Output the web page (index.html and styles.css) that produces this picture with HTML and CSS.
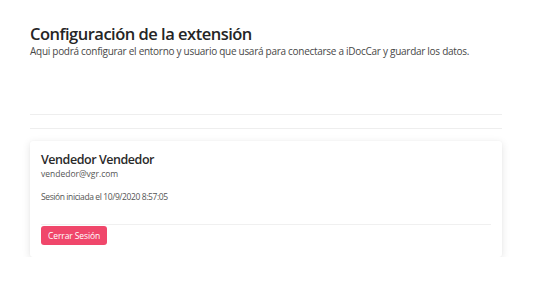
FILE: index.html
```html
<!DOCTYPE html>
<html lang="es">
<head>
<meta charset="utf-8">
<title>Configuración de la extensión</title>
<link rel="stylesheet" href="styles.css">
</head>
<body>
<main class="page">
  <header class="intro">
    <h1 class="title">Configuración de la extensión</h1>
    <p class="subtitle">Aqui podrá configurar el entorno y usuario que usará para conectarse a iDocCar y guardar los datos.</p>
  </header>
  <div class="rules">
    <hr class="rule">
    <hr class="rule">
  </div>
  <section class="card">
    <h2 class="name">Vendedor Vendedor</h2>
    <p class="email">vendedor@vgr.com</p>
    <p class="session">Sesión iniciada el 10/9/2020 8:57:05</p>
    <div class="card-footer">
      <button class="btn-logout" type="button">Cerrar Sesión</button>
    </div>
  </section>
</main>
</body>
</html>
```
FILE: styles.css
```css
* { box-sizing: border-box; }
html, body { margin: 0; padding: 0; background: #fff; }
body {
  font-family: "Open Sans", "Noto Sans", "Liberation Sans", sans-serif;
  color: #212529;
}
.page {
  padding: 24px 31px 0 30px;
}
.intro { margin: 0; }
.title {
  margin: 0;
  font-size: 16.5px;
  font-weight: 600;
  line-height: 20px;
  color: #252525;
  letter-spacing: -0.5px;
}
.subtitle {
  margin: 0;
  font-size: 10px;
  line-height: 14px;
  color: #484848;
  letter-spacing: -0.28px;
}
.rules {
  margin-top: 56px;
  display: flex;
  flex-direction: column;
  gap: 13px;
}
.rule {
  margin: 0;
  border: 0;
  border-top: 1px solid #eeeeee;
}
.card {
  margin-top: 12px;
  padding: 10px 11px 12px 11px;
  background: #fff;
  border-radius: 3px;
  box-shadow: 0 2px 8px rgba(0,0,0,0.11), 0 0 2px rgba(0,0,0,0.04);
}
.name {
  margin: 0;
  font-size: 12.5px;
  font-weight: 600;
  line-height: 17px;
  color: #2a2a2a;
  letter-spacing: -0.45px;
}
.email {
  margin: 0;
  font-size: 8.5px;
  line-height: 12px;
  color: #555;
}
.session {
  margin: 11px 0 0;
  font-size: 8.5px;
  line-height: 12px;
  color: #555;
  letter-spacing: -0.4px;
}
.card-footer {
  margin-top: 21px;
  border-top: 1px solid #f0f0f0;
  padding-top: 1px;
}
.btn-logout {
  display: block;
  font-family: inherit;
  font-size: 8.5px;
  color: #fff;
  background: #f0476b;
  border: 0;
  border-radius: 3px;
  height: 19px;
  padding: 0 7px;
  letter-spacing: -0.1px;
  cursor: pointer;
}
```
